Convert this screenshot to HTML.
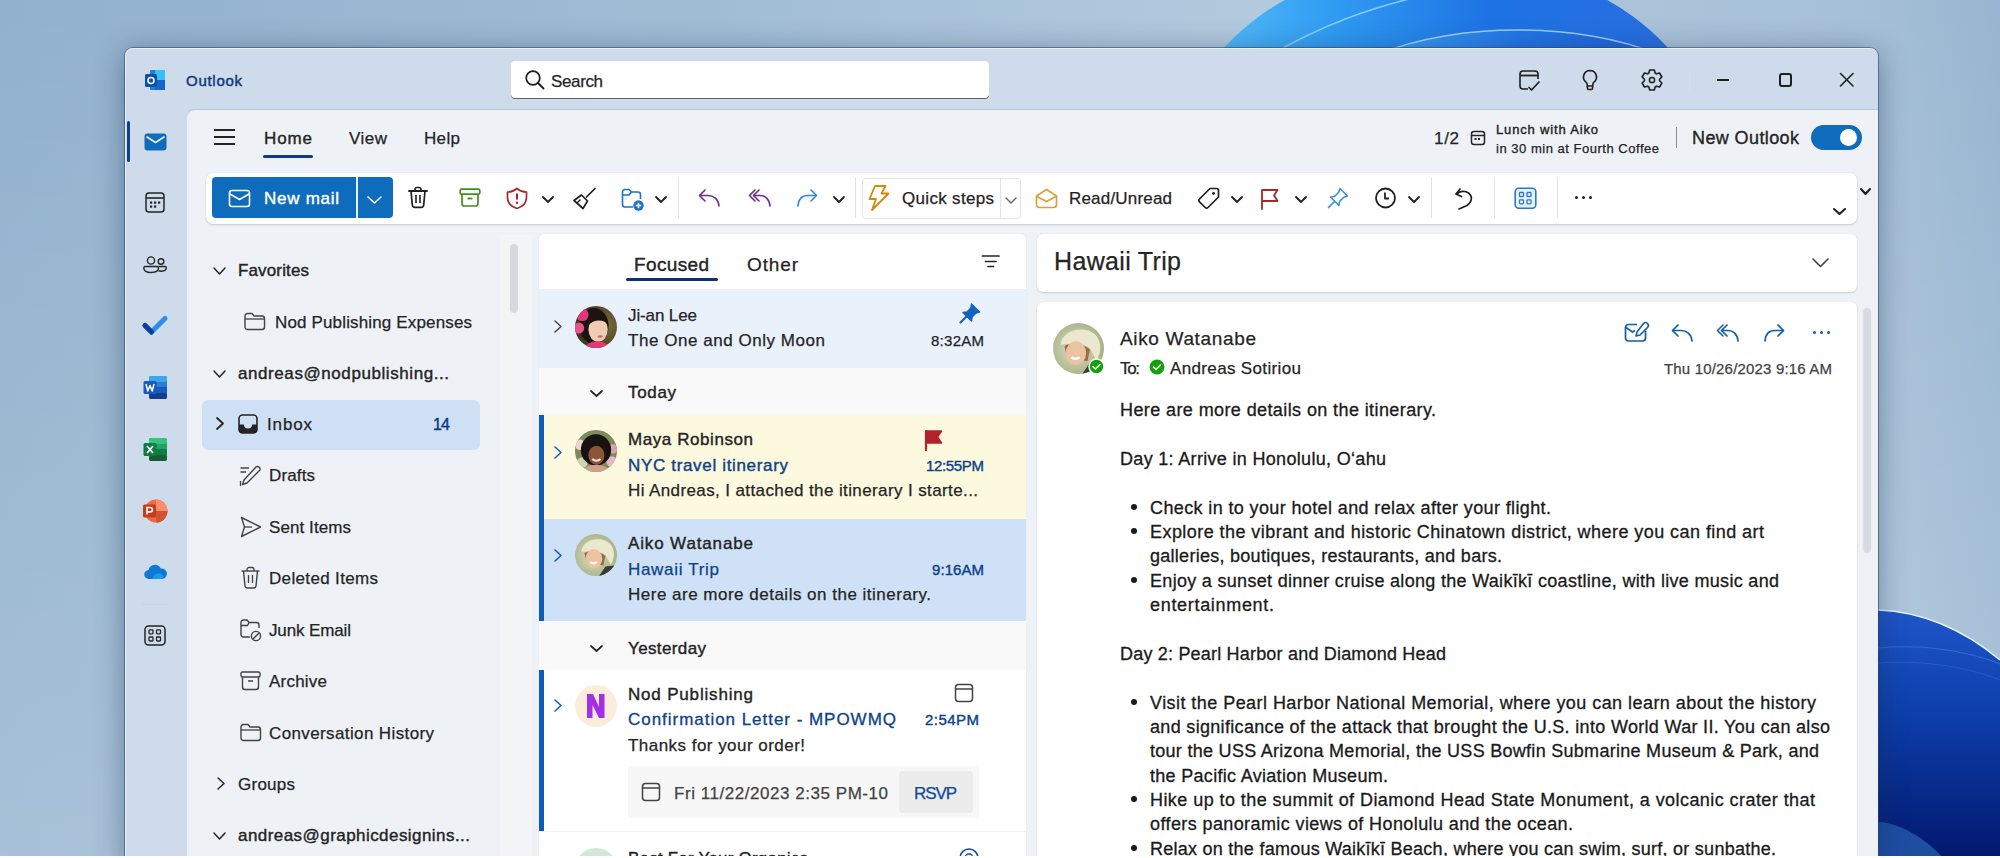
<!DOCTYPE html>
<html><head><meta charset="utf-8"><title>Outlook</title>
<style>
html,body{margin:0;padding:0;width:2000px;height:858px;overflow:hidden;background:#a9c0d4}
body{position:relative;font-family:"Liberation Sans",sans-serif;-webkit-font-smoothing:antialiased}
.a{position:absolute}
.t{position:absolute;white-space:nowrap}
svg.a{overflow:visible}
</style></head><body>
<svg class="a" style="left:0;top:0" width="2000" height="858" viewBox="0 0 2000 858">
<defs>
<linearGradient id="wp" x1="0" y1="0" x2="2000" y2="0" gradientUnits="userSpaceOnUse">
<stop offset="0" stop-color="#91b1cd"/><stop offset="0.35" stop-color="#a0bcd5"/><stop offset="0.62" stop-color="#b2cade"/><stop offset="0.93" stop-color="#a6c0d7"/><stop offset="1" stop-color="#97b5d0"/></linearGradient>
<linearGradient id="wpv" x1="0" y1="0" x2="0" y2="858" gradientUnits="userSpaceOnUse">
<stop offset="0" stop-color="#ffffff" stop-opacity="0"/><stop offset="1" stop-color="#ffffff" stop-opacity="0.2"/></linearGradient>
<linearGradient id="bl1" x1="1180" y1="0" x2="1700" y2="0" gradientUnits="userSpaceOnUse">
<stop offset="0" stop-color="#5cc4fa"/><stop offset="0.3" stop-color="#2f9bf2"/><stop offset="0.6" stop-color="#1e72e4"/><stop offset="1" stop-color="#2a6ee0"/></linearGradient>
<linearGradient id="bl1b" x1="1390" y1="0" x2="1650" y2="0" gradientUnits="userSpaceOnUse">
<stop offset="0" stop-color="#3b9ff4"/><stop offset="0.5" stop-color="#2376e6"/><stop offset="1" stop-color="#1f62da"/></linearGradient>
<linearGradient id="bl2" x1="0" y1="600" x2="0" y2="858" gradientUnits="userSpaceOnUse">
<stop offset="0" stop-color="#2058cc"/><stop offset="0.45" stop-color="#0d3eaa"/><stop offset="1" stop-color="#03186e"/></linearGradient>
</defs>
<rect width="2000" height="858" fill="url(#wp)"/>
<rect width="2000" height="858" fill="url(#wpv)"/>
<ellipse cx="1446" cy="152" rx="264" ry="192" fill="url(#bl1)"/>
<path d="M1262 60 C1320 25 1370 8 1425 -5" stroke="#9fe0ff" stroke-width="1.6" fill="none" opacity="0.75"/>
<ellipse cx="1518" cy="115" rx="200" ry="85" fill="url(#bl1b)" stroke="#b5e4ff" stroke-width="1.4" stroke-opacity="0.8"/>
<path d="M1878 610 C1930 612 1970 635 2000 660 L2000 858 L1878 858 Z" fill="url(#bl2)"/>
<path d="M1878 610 C1930 612 1970 635 2000 660" stroke="#e6f4ff" stroke-width="1.5" fill="none"/>
<path d="M1878 648 C1920 644 1965 650 2000 664" stroke="#4a7fe0" stroke-width="1.2" fill="none" opacity="0.55"/>
<path d="M1878 663 C1920 660 1965 666 2000 680" stroke="#4a7fe0" stroke-width="1" fill="none" opacity="0.35"/>
<path d="M1878 822 C1900 823 1925 838 1943 858 L1878 858 Z" fill="#1d4ea2"/>
</svg>
<div class="a" style="left:125px;top:48px;width:1753px;height:820px;background:#cddbea;border-radius:8px 8px 0 0;box-shadow:0 4px 30px rgba(20,45,80,0.45),0 0 0 1px rgba(45,75,115,0.55),inset 1px 1px 0 rgba(255,255,255,0.55)"></div>
<div class="a" style="left:187px;top:110px;width:1691px;height:746px;background:#eef2f7;border-radius:8px 0 0 0;box-shadow:0 -1px 0 rgba(120,140,165,0.25)"></div>
<div class="a" style="left:0;top:856px;width:2000px;height:2px;background:#fff"></div>
<svg class="a" style="left:144px;top:69px;" width="22" height="23" viewBox="0 0 22 23" fill="none">
<rect x="6" y="1" width="15" height="20" rx="1.2" fill="#1b7fd6"/>
<rect x="11" y="1" width="10" height="10" fill="#38c0f2"/>
<rect x="11" y="11" width="10" height="10" fill="#1466c8"/>
<rect x="1" y="5" width="12" height="13" rx="1.5" fill="#0b4fa6"/>
<circle cx="7" cy="11.5" r="3" stroke="#fff" stroke-width="1.6"/></svg>
<div class="t" style="left:186.0px;top:73.30px;font-size:15px;line-height:15px;-webkit-text-stroke:0.45px #0e3a80;color:#0e3a80;letter-spacing:0.718px;">Outlook</div>
<div class="a" style="left:511px;top:61px;width:478px;height:38px;background:#fff;border-radius:4px;box-shadow:inset 0 -1px 0 #616161"></div>
<svg class="a" style="left:524px;top:69px;" width="22" height="22" viewBox="0 0 22 22" fill="none"><circle cx="9" cy="9" r="6.8" stroke="#1f1f1f" stroke-width="1.7"/><path d="M14 14 L19.5 19.5" stroke="#1f1f1f" stroke-width="1.8" stroke-linecap="round"/></svg>
<div class="t" style="left:551.0px;top:72.61px;font-size:17px;line-height:17px;-webkit-text-stroke:0.25px #242424;color:#242424;letter-spacing:-0.373px;">Search</div>
<svg class="a" style="left:1518px;top:69px;" width="24" height="24" viewBox="0 0 24 24" fill="none"><path d="M10 20 H5 a3 3 0 0 1 -3 -3 V5 a3 3 0 0 1 3 -3 H17 a3 3 0 0 1 3 3 V10" stroke="#1f1f1f" stroke-width="1.6"/>
<path d="M2 6.5 H20" stroke="#1f1f1f" stroke-width="1.8"/>
<path d="M11 18.5 L13.5 21 L21 13" stroke="#1f1f1f" stroke-width="1.7" stroke-linecap="round" stroke-linejoin="round"/></svg>
<svg class="a" style="left:1580px;top:68px;" width="20" height="24" viewBox="0 0 20 24" fill="none"><path d="M10 2.5 a6.5 6.5 0 0 1 4 11.6 c-.8 .7 -1.2 1.4 -1.2 2.4 V18 H7.2 V16.5 c0 -1 -.4 -1.7 -1.2 -2.4 A6.5 6.5 0 0 1 10 2.5 Z" stroke="#1f1f1f" stroke-width="1.6"/>
<path d="M7.4 18.2 V20 a1.5 1.5 0 0 0 1.5 1.5 h2.2 a1.5 1.5 0 0 0 1.5 -1.5 V18.2" stroke="#1f1f1f" stroke-width="1.6"/></svg>
<svg class="a" style="left:1639.5px;top:68px;" width="24" height="24" viewBox="0 0 24 24" fill="none"><polygon points="8.91,5.06 9.68,1.96 14.32,1.96 15.09,5.06 16.47,5.85 19.53,4.98 21.85,8.99 19.56,11.21 19.56,12.79 21.85,15.01 19.53,19.02 16.47,18.15 15.09,18.94 14.32,22.04 9.68,22.04 8.91,18.94 7.53,18.15 4.47,19.02 2.15,15.01 4.44,12.79 4.44,11.21 2.15,8.99 4.47,4.98 7.53,5.85" stroke="#1f1f1f" stroke-width="1.6" stroke-linejoin="round"/><circle cx="12" cy="12" r="2.6" stroke="#1f1f1f" stroke-width="1.5"/></svg>
<div class="a" style="left:1689px;top:70px;width:1px;height:22px;background:#d5dfe9;"></div>
<div class="a" style="left:1717px;top:79px;width:12px;height:2px;background:#1f1f1f;"></div>
<div class="a" style="left:1779px;top:73px;width:9px;height:10px;border:2px solid #1f1f1f;border-radius:3px"></div>
<svg class="a" style="left:1839px;top:72px;" width="16" height="16" viewBox="0 0 16 16" fill="none"><path d="M1.5 1.5 L14 14 M14 1.5 L1.5 14" stroke="#1f1f1f" stroke-width="1.6" stroke-linecap="round"/></svg>
<div class="a" style="left:127px;top:121px;width:2.5px;height:41px;background:#0d3f90;border-radius:2px"></div>
<div class="a" style="left:214px;top:129px;width:21px;height:2px;background:#242424;"></div>
<div class="a" style="left:214px;top:136px;width:21px;height:2px;background:#242424;"></div>
<div class="a" style="left:214px;top:143px;width:21px;height:2px;background:#242424;"></div>
<div class="t" style="left:264.0px;top:129.61px;font-size:17px;line-height:17px;-webkit-text-stroke:0.4px #242424;color:#242424;letter-spacing:0.884px;">Home</div>
<div class="a" style="left:263px;top:155px;width:50px;height:3px;background:#123a8c;border-radius:2px"></div>
<div class="t" style="left:349.0px;top:129.61px;font-size:17px;line-height:17px;-webkit-text-stroke:0.25px #242424;color:#242424;letter-spacing:0.487px;">View</div>
<div class="t" style="left:424.0px;top:129.61px;font-size:17px;line-height:17px;-webkit-text-stroke:0.25px #242424;color:#242424;letter-spacing:0.346px;">Help</div>
<div class="t" style="left:1434.0px;top:129.61px;font-size:17px;line-height:17px;-webkit-text-stroke:0.25px #242424;color:#242424;letter-spacing:0.684px;">1/2</div>
<svg class="a" style="left:1470px;top:130px;" width="16" height="16" viewBox="0 0 16 16" fill="none"><rect x="1.5" y="1.5" width="13" height="13" rx="2.5" stroke="#242424" stroke-width="1.5"/><path d="M1.5 5.5 H14.5" stroke="#242424" stroke-width="1.5"/><rect x="4.5" y="8" width="2" height="2" fill="#242424"/><rect x="8" y="8" width="2" height="2" fill="#242424"/></svg>
<div class="t" style="left:1496.0px;top:123.00px;font-size:13px;line-height:13px;-webkit-text-stroke:0.4px #242424;color:#242424;letter-spacing:0.833px;">Lunch with Aiko</div>
<div class="t" style="left:1496.0px;top:142.00px;font-size:13px;line-height:13px;-webkit-text-stroke:0.25px #242424;color:#242424;letter-spacing:0.518px;">in 30 min at Fourth Coffee</div>
<div class="a" style="left:1676px;top:127px;width:1px;height:21px;background:#8a8a8a;"></div>
<div class="t" style="left:1692.0px;top:128.76px;font-size:18px;line-height:18px;-webkit-text-stroke:0.35px #242424;color:#242424;letter-spacing:0.396px;">New Outlook</div>
<div class="a" style="left:1811px;top:125px;width:51px;height:25px;background:#0f6cbd;border-radius:13px"></div>
<div class="a" style="left:1840px;top:129px;width:17px;height:17px;background:#fff;border-radius:50%"></div>
<div class="a" style="left:206px;top:173px;width:1651px;height:51px;background:#fff;border-radius:7px;box-shadow:0 1px 2px rgba(0,0,0,0.16),0 0 1px rgba(0,0,0,0.1)"></div>
<div class="a" style="left:212px;top:177px;width:181px;height:41px;background:#0f6cbd;border-radius:4px"></div>
<div class="a" style="left:356px;top:177px;width:1.5px;height:41px;background:#e8f1fa;"></div>
<svg class="a" style="left:228px;top:189px;" width="24" height="20" viewBox="0 0 24 20" fill="none"><rect x="1.5" y="1.5" width="20" height="16" rx="2.5" stroke="#fff" stroke-width="1.6"/><path d="M2 5 L11.5 10.5 L21 5" stroke="#fff" stroke-width="1.6" stroke-linejoin="round"/></svg>
<div class="t" style="left:264.0px;top:189.61px;font-size:17px;line-height:17px;-webkit-text-stroke:0.4px #ffffff;color:#ffffff;letter-spacing:0.729px;">New mail</div>
<svg class="a" style="left:366px;top:195px;" width="17" height="10" viewBox="0 0 17 10" fill="none"><path d="M2 2 L8.5 8 L15 2" stroke="#fff" stroke-width="1.6" stroke-linecap="round" stroke-linejoin="round"/></svg>
<svg class="a" style="left:407px;top:186px;" width="22" height="23" viewBox="0 0 22 23" fill="none"><path d="M2 5 H20" stroke="#1f1f1f" stroke-width="1.8" stroke-linecap="round"/><path d="M8 5 V3.5 a2 2 0 0 1 2 -2 h2 a2 2 0 0 1 2 2 V5" stroke="#1f1f1f" stroke-width="1.6"/><path d="M4 5 L5.3 19 a2.5 2.5 0 0 0 2.5 2.3 h6.4 a2.5 2.5 0 0 0 2.5 -2.3 L18 5" stroke="#1f1f1f" stroke-width="1.7"/><path d="M9 9 V17 M13 9 V17" stroke="#1f1f1f" stroke-width="1.6"/></svg>
<svg class="a" style="left:459px;top:188px;" width="22" height="20" viewBox="0 0 22 20" fill="none"><rect x="1.2" y="1.2" width="19.6" height="5" rx="1.5" stroke="#3f8f1a" stroke-width="1.7"/><path d="M3 6.5 V15.5 a2.5 2.5 0 0 0 2.5 2.5 h11 a2.5 2.5 0 0 0 2.5 -2.5 V6.5" stroke="#3f8f1a" stroke-width="1.7"/><path d="M8.5 10.5 H13.5" stroke="#3f8f1a" stroke-width="1.8"/></svg>
<svg class="a" style="left:506px;top:187px;" width="22" height="23" viewBox="0 0 22 23" fill="none"><path d="M11 1.5 C8 4 5 5 1.5 5 V10.5 C1.5 16 5 19.5 11 21.5 C17 19.5 20.5 16 20.5 10.5 V5 C17 5 14 4 11 1.5 Z" stroke="#a8262c" stroke-width="1.7" stroke-linejoin="round"/><path d="M11 6.5 V12.5" stroke="#a8262c" stroke-width="2"/><circle cx="11" cy="15.8" r="1.2" fill="#a8262c"/></svg>
<svg class="a" style="left:541px;top:195px;" width="14" height="9" viewBox="0 0 14 9" fill="none"><path d="M2 2 L7.0 7 L12 2" stroke="#1f1f1f" stroke-width="1.8" stroke-linecap="round" stroke-linejoin="round"/></svg>
<svg class="a" style="left:572px;top:187px;" width="25" height="24" viewBox="0 0 25 24" fill="none"><path d="M23 1.5 L14.5 10" stroke="#1f1f1f" stroke-width="1.7" stroke-linecap="round"/><path d="M9.5 8 L15.5 14 L11 21.5 L2 13.5 Z" stroke="#1f1f1f" stroke-width="1.7" stroke-linejoin="round"/><path d="M5 16 L8.5 12.5" stroke="#1f1f1f" stroke-width="1.5"/></svg>
<svg class="a" style="left:621px;top:188px;" width="24" height="24" viewBox="0 0 24 24" fill="none"><path d="M12 19 H4 a2.5 2.5 0 0 1 -2.5 -2.5 V4 a2.5 2.5 0 0 1 2.5 -2.5 h4 l2.5 2.5 H17 a2.5 2.5 0 0 1 2.5 2.5 V11" stroke="#1a73c8" stroke-width="1.6" stroke-linejoin="round"/><path d="M1.5 7 H8 l2.5 -3" stroke="#1a73c8" stroke-width="1.6"/><circle cx="17.5" cy="17.5" r="5.2" fill="#1a73c8"/><path d="M17.5 14.8 V20.2 M14.8 17.5 H20.2" stroke="#fff" stroke-width="1.5"/></svg>
<svg class="a" style="left:654px;top:195px;" width="14" height="9" viewBox="0 0 14 9" fill="none"><path d="M2 2 L7.0 7 L12 2" stroke="#1f1f1f" stroke-width="1.8" stroke-linecap="round" stroke-linejoin="round"/></svg>
<div class="a" style="left:678px;top:177px;width:1px;height:41px;background:#e1e1e1;"></div>
<svg class="a" style="left:697px;top:188px;" width="25" height="20" viewBox="0 0 25 20" fill="none"><path d="M8 2 L2.5 7.5 L8 13" stroke="#6e2a8e" stroke-width="1.6" stroke-linecap="round" stroke-linejoin="round"/><path d="M3 7.5 H11 C16.5 7.5 21.5 11 22 18" stroke="#6e2a8e" stroke-width="1.6" stroke-linecap="round"/></svg>
<svg class="a" style="left:748px;top:188px;" width="25" height="20" viewBox="0 0 25 20" fill="none"><path d="M7 2 L1.5 7.5 L7 13" stroke="#6e2a8e" stroke-width="1.6" stroke-linecap="round" stroke-linejoin="round"/><path d="M11 2 L5.5 7.5 L11 13" stroke="#6e2a8e" stroke-width="1.6" stroke-linecap="round" stroke-linejoin="round"/><path d="M6 7.5 H12 C17 7.5 21.5 11 22 18" stroke="#6e2a8e" stroke-width="1.6" stroke-linecap="round"/></svg>
<svg class="a" style="left:796px;top:188px;" width="25" height="20" viewBox="0 0 25 20" fill="none"><path d="M15 2 L20.5 7.5 L15 13" stroke="#2f86d6" stroke-width="1.6" stroke-linecap="round" stroke-linejoin="round"/><path d="M20 7.5 H12 C6.5 7.5 2.5 11 2 18" stroke="#2f86d6" stroke-width="1.6" stroke-linecap="round"/></svg>
<svg class="a" style="left:832px;top:195px;" width="14" height="9" viewBox="0 0 14 9" fill="none"><path d="M2 2 L7.0 7 L12 2" stroke="#1f1f1f" stroke-width="1.8" stroke-linecap="round" stroke-linejoin="round"/></svg>
<div class="a" style="left:855px;top:177px;width:1px;height:41px;background:#e1e1e1;"></div>
<div class="a" style="left:862px;top:178px;width:157px;height:39px;border:1px solid #e3e3e3;border-radius:4px"></div>
<div class="a" style="left:1000px;top:178px;width:1px;height:40px;background:#e3e3e3;"></div>
<svg class="a" style="left:866px;top:184px;" width="26" height="28" viewBox="0 0 26 28" fill="none"><path d="M9 2 H19.5 L15.5 9.5 H22.5 L6 26 L10 15 H3.5 Z" stroke="#d08a0c" stroke-width="1.8" stroke-linejoin="round"/></svg>
<div class="t" style="left:902.0px;top:189.61px;font-size:17px;line-height:17px;-webkit-text-stroke:0.25px #242424;color:#242424;letter-spacing:0.319px;">Quick steps</div>
<svg class="a" style="left:1004px;top:196px;" width="14" height="9" viewBox="0 0 14 9" fill="none"><path d="M2 2 L7.0 7 L12 2" stroke="#616161" stroke-width="1.4" stroke-linecap="round" stroke-linejoin="round"/></svg>
<svg class="a" style="left:1035px;top:188px;" width="23" height="21" viewBox="0 0 23 21" fill="none"><path d="M1.5 8 L11.5 1.5 L21.5 8 V16.5 a3 3 0 0 1 -3 3 H4.5 a3 3 0 0 1 -3 -3 Z" stroke="#d7a23c" stroke-width="1.7" stroke-linejoin="round"/><path d="M2 8.5 L11.5 13.5 L21 8.5" stroke="#d7a23c" stroke-width="1.7"/></svg>
<div class="t" style="left:1069.0px;top:189.61px;font-size:17px;line-height:17px;-webkit-text-stroke:0.25px #242424;color:#242424;letter-spacing:0.188px;">Read/Unread</div>
<svg class="a" style="left:1197px;top:186px;" width="24" height="24" viewBox="0 0 24 24" fill="none"><path d="M13 2.5 H19.5 a2 2 0 0 1 2 2 V11 L11 21.5 a2 2 0 0 1 -2.8 0 L2.5 15.8 a2 2 0 0 1 0 -2.8 Z" stroke="#1f1f1f" stroke-width="1.7" stroke-linejoin="round"/><circle cx="16.5" cy="7.5" r="1.4" fill="#1f1f1f"/></svg>
<svg class="a" style="left:1230px;top:195px;" width="14" height="9" viewBox="0 0 14 9" fill="none"><path d="M2 2 L7.0 7 L12 2" stroke="#1f1f1f" stroke-width="1.8" stroke-linecap="round" stroke-linejoin="round"/></svg>
<svg class="a" style="left:1260px;top:188px;" width="20" height="22" viewBox="0 0 20 22" fill="none"><path d="M2 21 V2 H17.5 L14 7.5 L17.5 13 H2" stroke="#a8262c" stroke-width="1.8" stroke-linejoin="round" stroke-linecap="round"/></svg>
<svg class="a" style="left:1294px;top:195px;" width="14" height="9" viewBox="0 0 14 9" fill="none"><path d="M2 2 L7.0 7 L12 2" stroke="#1f1f1f" stroke-width="1.8" stroke-linecap="round" stroke-linejoin="round"/></svg>
<svg class="a" style="left:1326px;top:186px;" width="24" height="24" viewBox="0 0 24 24" fill="none"><path d="M14 2.5 L21.5 10 L17.5 11.5 L13.5 15.5 L13 19.5 L4.5 11 L8.5 10.5 L12.5 6.5 Z" stroke="#3a8fde" stroke-width="1.6" stroke-linejoin="round"/><path d="M8.5 15.5 L2.5 21.5" stroke="#3a8fde" stroke-width="1.7" stroke-linecap="round"/></svg>
<svg class="a" style="left:1374px;top:187px;" width="24" height="24" viewBox="0 0 24 24" fill="none"><circle cx="11.5" cy="11" r="9.5" stroke="#1f1f1f" stroke-width="1.8"/><path d="M11 5.5 V11.5 H15" stroke="#1f1f1f" stroke-width="1.8" stroke-linejoin="round"/></svg>
<svg class="a" style="left:1407px;top:195px;" width="14" height="9" viewBox="0 0 14 9" fill="none"><path d="M2 2 L7.0 7 L12 2" stroke="#1f1f1f" stroke-width="1.8" stroke-linecap="round" stroke-linejoin="round"/></svg>
<div class="a" style="left:1431px;top:177px;width:1px;height:41px;background:#e1e1e1;"></div>
<svg class="a" style="left:1453px;top:187px;" width="22" height="24" viewBox="0 0 22 24" fill="none"><path d="M7 2 L3 7 L8.5 9.5" stroke="#1f1f1f" stroke-width="1.7" stroke-linecap="round" stroke-linejoin="round"/><path d="M3.5 7 C7 4 12 3.5 15.5 6 C20 9.5 19 15 14 18.5 L6 22" stroke="#1f1f1f" stroke-width="1.7" stroke-linecap="round"/></svg>
<div class="a" style="left:1494px;top:177px;width:1px;height:41px;background:#e1e1e1;"></div>
<svg class="a" style="left:1514px;top:187px;" width="24" height="23" viewBox="0 0 24 23" fill="none"><rect x="1.2" y="1.2" width="20.6" height="20" rx="3.5" fill="#e6f1fb" stroke="#2a78c8" stroke-width="1.6"/><rect x="5.5" y="5.5" width="4" height="4" rx="0.8" stroke="#2a78c8" stroke-width="1.3"/><rect x="13" y="5.5" width="4" height="4" rx="0.8" stroke="#2a78c8" stroke-width="1.3"/><rect x="5.5" y="12.8" width="4" height="4" rx="0.8" stroke="#2a78c8" stroke-width="1.3"/><rect x="13" y="12.8" width="4" height="4" rx="0.8" stroke="#2a78c8" stroke-width="1.3"/></svg>
<div class="a" style="left:1557px;top:177px;width:1px;height:41px;background:#e1e1e1;"></div>
<div class="a" style="left:1574.5px;top:196px;width:3px;height:3px;background:#1f1f1f;border-radius:50%"></div>
<div class="a" style="left:1581.5px;top:196px;width:3px;height:3px;background:#1f1f1f;border-radius:50%"></div>
<div class="a" style="left:1588.5px;top:196px;width:3px;height:3px;background:#1f1f1f;border-radius:50%"></div>
<svg class="a" style="left:1832px;top:207px;" width="15" height="9" viewBox="0 0 15 9" fill="none"><path d="M2 2 L7.5 7 L13 2" stroke="#1f1f1f" stroke-width="2.1" stroke-linecap="round" stroke-linejoin="round"/></svg>
<svg class="a" style="left:1859px;top:187px;" width="13" height="9" viewBox="0 0 13 9" fill="none"><path d="M2 2 L6.5 7 L11 2" stroke="#1f1f1f" stroke-width="2.1" stroke-linecap="round" stroke-linejoin="round"/></svg>
<svg class="a" style="left:144px;top:133px;" width="23" height="18" viewBox="0 0 23 18" fill="none"><rect x="0.5" y="0.5" width="22" height="17" rx="3" fill="#0f6cbd"/><path d="M3 4 L11.5 9.5 L20 4" stroke="#e8f2fb" stroke-width="1.6" stroke-linecap="round" stroke-linejoin="round"/></svg>
<svg class="a" style="left:145px;top:192px;" width="20" height="21" viewBox="0 0 20 21" fill="none"><rect x="1" y="1" width="18" height="19" rx="3" stroke="#242424" stroke-width="1.5"/><path d="M1 6 H19" stroke="#242424" stroke-width="1.6"/><rect x="5" y="9.5" width="2.2" height="2.2" fill="#242424"/><rect x="9" y="9.5" width="2.2" height="2.2" fill="#242424"/><rect x="13" y="9.5" width="2.2" height="2.2" fill="#242424"/><rect x="5" y="13.5" width="2.2" height="2.2" fill="#242424"/><rect x="9" y="13.5" width="2.2" height="2.2" fill="#242424"/></svg>
<svg class="a" style="left:143px;top:256px;" width="25" height="18" viewBox="0 0 25 18" fill="none"><circle cx="8" cy="4.5" r="3.6" stroke="#242424" stroke-width="1.4"/><circle cx="18" cy="5.5" r="2.8" stroke="#242424" stroke-width="1.4"/><path d="M2 10.5 H14 a1.5 1.5 0 0 1 1.5 1.5 C15.5 15 12.5 16.5 8 16.5 C3.5 16.5 0.8 15 0.8 12 a1.5 1.5 0 0 1 1.2 -1.5 Z" stroke="#242424" stroke-width="1.4"/><path d="M15.5 10.5 H22 a1.3 1.3 0 0 1 1.3 1.3 C23.3 14 21.5 15.2 18.5 15.2 L15.5 14.8" stroke="#242424" stroke-width="1.4"/></svg>
<svg class="a" style="left:143px;top:316px;" width="24" height="20" viewBox="0 0 24 20" fill="none"><path d="M2 9.5 L8.5 16 L22 2.5" stroke="#2f8fe6" stroke-width="5" stroke-linecap="round" stroke-linejoin="round"/><path d="M2 9.5 L8.5 16" stroke="#0b3fa0" stroke-width="5" stroke-linecap="round"/></svg>
<svg class="a" style="left:143px;top:375px;" width="25" height="25" viewBox="0 0 25 25" fill="none"><rect x="6" y="1" width="18" height="23" rx="2" fill="#2b7cd3"/><rect x="6" y="1" width="18" height="6" rx="2" fill="#41a5ee"/><rect x="6" y="12" width="18" height="6" fill="#185abd"/><rect x="6" y="18" width="18" height="6" rx="2" fill="#103f91"/><rect x="0.5" y="6" width="13" height="13" rx="1.5" fill="#185abd"/><path d="M3 9 L4.8 16 L7 10.5 L9.2 16 L11 9" stroke="#fff" stroke-width="1.5" stroke-linejoin="round"/></svg>
<svg class="a" style="left:143px;top:437px;" width="25" height="25" viewBox="0 0 25 25" fill="none"><rect x="6" y="1" width="18" height="23" rx="2" fill="#21a366"/><rect x="6" y="1" width="18" height="6" rx="2" fill="#33c481"/><rect x="6" y="12" width="18" height="6" fill="#107c41"/><rect x="6" y="18" width="18" height="6" rx="2" fill="#185c37"/><rect x="0.5" y="6" width="13" height="13" rx="1.5" fill="#107c41"/><path d="M4 9 L10 16 M10 9 L4 16" stroke="#fff" stroke-width="1.7"/></svg>
<svg class="a" style="left:142px;top:498px;" width="26" height="26" viewBox="0 0 26 26" fill="none"><circle cx="14" cy="13" r="11.5" fill="#ed6c47"/><path d="M14 1.5 A11.5 11.5 0 0 1 25.5 13 H14 Z" fill="#ff8f6b"/><path d="M14 13 H25.5 A11.5 11.5 0 0 1 14 24.5 Z" fill="#d35230"/><rect x="1" y="6.5" width="13" height="13" rx="1.5" fill="#c43e1c"/><path d="M5 16.5 V9.5 H8.2 a2.2 2.2 0 0 1 0 4.4 H5" stroke="#fff" stroke-width="1.6"/></svg>
<svg class="a" style="left:144px;top:564px;" width="23" height="16" viewBox="0 0 23 16" fill="none"><path d="M5 15 a4.5 4.5 0 0 1 -0.5 -9 a6.5 6.5 0 0 1 12.2 -1.5 a5 5 0 0 1 1.8 10.5 Z" fill="#0f78d4"/><path d="M9 15 a4 4 0 0 1 4 -5 a5 5 0 0 1 5.5 1 a3 3 0 0 1 0 4 Z" fill="#1c9ae8"/></svg>
<div class="a" style="left:142px;top:604px;width:26px;height:1px;background:#c8d5e1;"></div>
<svg class="a" style="left:144px;top:625px;" width="22" height="21" viewBox="0 0 22 21" fill="none"><rect x="1" y="1" width="20" height="19" rx="3.5" stroke="#242424" stroke-width="1.5"/><rect x="5" y="4.8" width="4" height="4" rx="0.8" stroke="#242424" stroke-width="1.3"/><rect x="12.5" y="4.8" width="4" height="4" rx="0.8" stroke="#242424" stroke-width="1.3"/><rect x="5" y="12" width="4" height="4" rx="0.8" stroke="#242424" stroke-width="1.3"/><rect x="12.5" y="12" width="4" height="4" rx="0.8" stroke="#242424" stroke-width="1.3"/></svg>
<div class="a" style="left:500px;top:235px;width:32px;height:621px;background:#f3f4f6;"></div>
<div class="a" style="left:510px;top:244px;width:8px;height:69px;background:#d6d8db;border-radius:4px"></div>
<svg class="a" style="left:212px;top:266px;" width="15" height="10" viewBox="0 0 15 10" fill="none"><path d="M2 2 L7.5 8 L13 2" stroke="#242424" stroke-width="1.5" stroke-linecap="round" stroke-linejoin="round"/></svg>
<div class="t" style="left:238.0px;top:261.61px;font-size:17px;line-height:17px;-webkit-text-stroke:0.4px #242424;color:#242424;letter-spacing:0.136px;">Favorites</div>
<svg class="a" style="left:244px;top:312px;" width="22" height="19" viewBox="0 0 22 19" fill="none"><path d="M1 4 a2.5 2.5 0 0 1 2.5 -2.5 H8 l2 2.5 H18 a2.5 2.5 0 0 1 2.5 2.5 V15 a2.5 2.5 0 0 1 -2.5 2.5 H3.5 A2.5 2.5 0 0 1 1 15 Z" stroke="#424242" stroke-width="1.4" stroke-linejoin="round"/><path d="M1 7 H20.5" stroke="#424242" stroke-width="1.3"/></svg>
<div class="t" style="left:275.0px;top:313.61px;font-size:17px;line-height:17px;-webkit-text-stroke:0.25px #242424;color:#242424;letter-spacing:0.149px;">Nod Publishing Expenses</div>
<svg class="a" style="left:212px;top:369px;" width="15" height="10" viewBox="0 0 15 10" fill="none"><path d="M2 2 L7.5 8 L13 2" stroke="#242424" stroke-width="1.5" stroke-linecap="round" stroke-linejoin="round"/></svg>
<div class="t" style="left:238.0px;top:364.61px;font-size:17px;line-height:17px;-webkit-text-stroke:0.4px #242424;color:#242424;letter-spacing:0.575px;">andreas@nodpublishing...</div>
<div class="a" style="left:202px;top:400px;width:278px;height:50px;background:#cfe0f5;border-radius:6px"></div>
<svg class="a" style="left:215px;top:416px;" width="10" height="15" viewBox="0 0 10 15" fill="none"><path d="M2 2 L8 7.5 L2 13" stroke="#242424" stroke-width="1.8" stroke-linecap="round" stroke-linejoin="round"/></svg>
<svg class="a" style="left:238px;top:414px;" width="21" height="20" viewBox="0 0 21 20" fill="none"><rect x="1" y="1" width="18" height="18" rx="3.5" stroke="#242424" stroke-width="1.6"/><path d="M1 10.5 H6 a4 4 0 0 0 8 0 H19 V15.5 a3.5 3.5 0 0 1 -3.5 3.5 H4.5 A3.5 3.5 0 0 1 1 15.5 Z" fill="#242424"/></svg>
<div class="t" style="left:267.0px;top:415.61px;font-size:17px;line-height:17px;-webkit-text-stroke:0.25px #242424;color:#242424;letter-spacing:0.853px;">Inbox</div>
<div class="t" style="left:433.0px;top:417.46px;font-size:16px;line-height:16px;-webkit-text-stroke:0.4px #0e3b80;color:#0e3b80;letter-spacing:-0.797px;">14</div>
<svg class="a" style="left:239px;top:465px;" width="23" height="23" viewBox="0 0 23 23" fill="none"><path d="M1.5 3 H10 M1.5 7 H7" stroke="#424242" stroke-width="1.3"/><path d="M17 2 a2.5 2.5 0 0 1 3.5 3.5 L8 18 L3.5 19.5 L5 15 Z" stroke="#424242" stroke-width="1.4" stroke-linejoin="round"/><path d="M1.5 21 V16" stroke="#424242" stroke-width="1.3"/></svg>
<div class="t" style="left:269.0px;top:466.61px;font-size:17px;line-height:17px;-webkit-text-stroke:0.25px #242424;color:#242424;letter-spacing:0.132px;">Drafts</div>
<svg class="a" style="left:240px;top:516px;" width="22" height="22" viewBox="0 0 22 22" fill="none"><path d="M1.5 1.5 L20.5 11 L1.5 20.5 L4.5 11 Z" stroke="#424242" stroke-width="1.4" stroke-linejoin="round"/><path d="M4.5 11 H12" stroke="#424242" stroke-width="1.3"/></svg>
<div class="t" style="left:269.0px;top:518.61px;font-size:17px;line-height:17px;-webkit-text-stroke:0.25px #242424;color:#242424;letter-spacing:0.082px;">Sent Items</div>
<svg class="a" style="left:240px;top:566px;" width="21" height="24" viewBox="0 0 21 24" fill="none"><path d="M1.5 5 H19.5" stroke="#424242" stroke-width="1.4"/><path d="M7 5 V3.5 a2 2 0 0 1 2 -2 h3 a2 2 0 0 1 2 2 V5" stroke="#424242" stroke-width="1.3"/><path d="M3.5 5 L5 20 a2.3 2.3 0 0 0 2.3 2 h6.4 a2.3 2.3 0 0 0 2.3 -2 L17.5 5" stroke="#424242" stroke-width="1.4"/><path d="M8.5 9 V17 M12.5 9 V17" stroke="#424242" stroke-width="1.3"/></svg>
<div class="t" style="left:269.0px;top:569.61px;font-size:17px;line-height:17px;-webkit-text-stroke:0.25px #242424;color:#242424;letter-spacing:0.343px;">Deleted Items</div>
<svg class="a" style="left:240px;top:619px;" width="22" height="23" viewBox="0 0 22 23" fill="none"><path d="M10 18 H3.5 A2.5 2.5 0 0 1 1 15.5 V3.5 A2.5 2.5 0 0 1 3.5 1 H7 L9 3.5 H16.5 A2.5 2.5 0 0 1 19 6 V9" stroke="#424242" stroke-width="1.4" stroke-linejoin="round"/><path d="M1 6.5 H7.5 L9 3.5" stroke="#424242" stroke-width="1.3"/><circle cx="16" cy="17" r="4.6" stroke="#424242" stroke-width="1.4"/><path d="M13 20 L19 14" stroke="#424242" stroke-width="1.3"/></svg>
<div class="t" style="left:269.0px;top:621.61px;font-size:17px;line-height:17px;-webkit-text-stroke:0.25px #242424;color:#242424;letter-spacing:-0.127px;">Junk Email</div>
<svg class="a" style="left:240px;top:671px;" width="21" height="20" viewBox="0 0 21 20" fill="none"><rect x="1" y="1" width="19" height="5" rx="1.5" stroke="#424242" stroke-width="1.4"/><path d="M2.5 6 V16 a2.5 2.5 0 0 0 2.5 2.5 H16 a2.5 2.5 0 0 0 2.5 -2.5 V6" stroke="#424242" stroke-width="1.4"/><path d="M8 10 H13" stroke="#424242" stroke-width="1.5"/></svg>
<div class="t" style="left:269.0px;top:672.61px;font-size:17px;line-height:17px;-webkit-text-stroke:0.25px #242424;color:#242424;letter-spacing:0.219px;">Archive</div>
<svg class="a" style="left:240px;top:723px;" width="22" height="19" viewBox="0 0 22 19" fill="none"><path d="M1 4 a2.5 2.5 0 0 1 2.5 -2.5 H8 l2 2.5 H18 a2.5 2.5 0 0 1 2.5 2.5 V15 a2.5 2.5 0 0 1 -2.5 2.5 H3.5 A2.5 2.5 0 0 1 1 15 Z" stroke="#424242" stroke-width="1.4" stroke-linejoin="round"/><path d="M1 7 H20.5" stroke="#424242" stroke-width="1.3"/></svg>
<div class="t" style="left:269.0px;top:724.61px;font-size:17px;line-height:17px;-webkit-text-stroke:0.25px #242424;color:#242424;letter-spacing:0.380px;">Conversation History</div>
<svg class="a" style="left:216px;top:776px;" width="10" height="15" viewBox="0 0 10 15" fill="none"><path d="M2 2 L8 7.5 L2 13" stroke="#242424" stroke-width="1.5" stroke-linecap="round" stroke-linejoin="round"/></svg>
<div class="t" style="left:238.0px;top:775.61px;font-size:17px;line-height:17px;-webkit-text-stroke:0.25px #242424;color:#242424;letter-spacing:0.250px;">Groups</div>
<svg class="a" style="left:212px;top:831px;" width="15" height="10" viewBox="0 0 15 10" fill="none"><path d="M2 2 L7.5 8 L13 2" stroke="#242424" stroke-width="1.5" stroke-linecap="round" stroke-linejoin="round"/></svg>
<div class="t" style="left:238.0px;top:826.61px;font-size:17px;line-height:17px;-webkit-text-stroke:0.4px #242424;color:#242424;letter-spacing:0.444px;">andreas@graphicdesignins...</div>
<div class="a" style="left:539px;top:234px;width:487px;height:640px;background:#fff;border-radius:5px 5px 0 0;box-shadow:0 0 1px rgba(0,0,0,0.12)"></div>
<div class="t" style="left:634.0px;top:254.92px;font-size:19px;line-height:19px;-webkit-text-stroke:0.4px #242424;color:#242424;letter-spacing:0.354px;">Focused</div>
<div class="a" style="left:626px;top:278px;width:92px;height:3px;background:#0f2f7a;border-radius:2px"></div>
<div class="t" style="left:747.0px;top:254.92px;font-size:19px;line-height:19px;-webkit-text-stroke:0.25px #242424;color:#242424;letter-spacing:0.870px;">Other</div>
<svg class="a" style="left:980px;top:253px;" width="21" height="16" viewBox="0 0 21 16" fill="none"><path d="M2.5 3 H19 M5.5 8.5 H16 M8 13.5 H13.5" stroke="#242424" stroke-width="1.7" stroke-linecap="round"/></svg>
<div class="a" style="left:539px;top:289px;width:487px;height:1px;background:#eef0f3;"></div>
<div class="a" style="left:539px;top:290px;width:487px;height:78px;background:#e9f1fb;"></div>
<svg class="a" style="left:553px;top:319px;" width="10" height="15" viewBox="0 0 10 15" fill="none"><path d="M2 2 L8 7.5 L2 13" stroke="#424242" stroke-width="1.4" stroke-linecap="round" stroke-linejoin="round"/></svg>
<svg class="a" style="left:575px;top:306px;" width="42" height="42" viewBox="0 0 42 42" fill="none"><defs><clipPath id="ca"><circle cx="21" cy="21" r="21"/></clipPath>
<radialGradient id="ga" cx="0.75" cy="0.45" r="0.8"><stop offset="0" stop-color="#7a6a3e"/><stop offset="1" stop-color="#3a2e18"/></radialGradient></defs>
<g clip-path="url(#ca)"><rect width="42" height="42" fill="url(#ga)"/>
<ellipse cx="18.900000000000002" cy="19.95" rx="14.7" ry="17.849999999999998" fill="#1c1411"/>
<circle cx="7.35" cy="8.82" r="6.3" fill="#e2357a"/>
<circle cx="3.78" cy="22.05" r="5.46" fill="#e8558a"/>
<ellipse cx="23.1" cy="23.520000000000003" rx="9.66" ry="12.18" fill="#f0cdb2"/>
<path d="M12.6 19.95 C13.65 8.4 30.45 7.35 33.6 18.900000000000002 C28.35 13.02 18.900000000000002 13.02 12.6 19.95 Z" fill="#1c1411"/>
<ellipse cx="22.05" cy="41.58" rx="11.55" ry="6.3" fill="#e03a72"/>
<ellipse cx="25.2" cy="30.45" rx="2.73" ry="1.26" fill="#c8706a"/>
</g></svg>
<div class="t" style="left:628.0px;top:306.61px;font-size:17px;line-height:17px;-webkit-text-stroke:0.25px #242424;color:#242424;letter-spacing:-0.117px;">Ji-an Lee</div>
<div class="t" style="left:628.0px;top:331.61px;font-size:17px;line-height:17px;-webkit-text-stroke:0.25px #242424;color:#242424;letter-spacing:0.542px;">The One and Only Moon</div>
<svg class="a" style="left:958px;top:302px;" width="24" height="23" viewBox="0 0 24 23" fill="none"><path d="M13.5 2 L21.5 10 L18 11 L14 15 L13.5 19 L5 10.5 L9 10 L13 6 Z" fill="#1362c2" stroke="#1362c2" stroke-width="1.5" stroke-linejoin="round"/><path d="M8.5 14.5 L2.5 20.5" stroke="#1362c2" stroke-width="2.2" stroke-linecap="round"/></svg>
<div class="t" style="left:931.0px;top:333.30px;font-size:15px;line-height:15px;-webkit-text-stroke:0.25px #242424;color:#242424;letter-spacing:0.261px;">8:32AM</div>
<div class="a" style="left:539px;top:368px;width:487px;height:47px;background:#f9f9fa;"></div>
<svg class="a" style="left:589px;top:389px;" width="15" height="9" viewBox="0 0 15 9" fill="none"><path d="M2 2 L7.5 7 L13 2" stroke="#242424" stroke-width="1.7" stroke-linecap="round" stroke-linejoin="round"/></svg>
<div class="t" style="left:628.0px;top:383.61px;font-size:17px;line-height:17px;-webkit-text-stroke:0.4px #242424;color:#242424;letter-spacing:0.659px;">Today</div>
<div class="a" style="left:539px;top:415px;width:487px;height:104px;background:#fdf9de;"></div>
<div class="a" style="left:539px;top:415px;width:5px;height:104px;background:#0f5bb5;"></div>
<svg class="a" style="left:553px;top:445px;" width="10" height="15" viewBox="0 0 10 15" fill="none"><path d="M2 2 L8 7.5 L2 13" stroke="#0f5bb5" stroke-width="1.5" stroke-linecap="round" stroke-linejoin="round"/></svg>
<svg class="a" style="left:575px;top:430px;" width="42" height="42" viewBox="0 0 42 42" fill="none"><defs><clipPath id="cb"><circle cx="21" cy="21" r="21"/></clipPath></defs>
<g clip-path="url(#cb)"><rect width="42" height="42" fill="#7d8a5e"/>
<circle cx="5.25" cy="14.7" r="5.25" fill="#e9d7d9"/><circle cx="37.800000000000004" cy="18.900000000000002" r="4.62" fill="#d9a3b5"/>
<circle cx="7.35" cy="32.550000000000004" r="5.25" fill="#c9d8b0"/><circle cx="36.75" cy="31.5" r="5.25" fill="#e7b9c8"/>
<ellipse cx="21.0" cy="19.95" rx="15.12" ry="15.75" fill="#1a1210"/>
<ellipse cx="21.42" cy="25.2" rx="7.98" ry="9.450000000000001" fill="#8a5637"/>
<path d="M17.22 28.979999999999997 Q21.42 32.550000000000004 25.62 28.979999999999997" stroke="#f1e4dc" stroke-width="2.1" fill="none"/>
<ellipse cx="21.0" cy="40.949999999999996" rx="12.6" ry="6.3" fill="#cf9f8a"/></g></svg>
<div class="t" style="left:628.0px;top:430.61px;font-size:17px;line-height:17px;-webkit-text-stroke:0.4px #242424;color:#242424;letter-spacing:0.573px;">Maya Robinson</div>
<div class="t" style="left:628.0px;top:456.61px;font-size:17px;line-height:17px;-webkit-text-stroke:0.4px #0d4288;color:#0d4288;letter-spacing:0.665px;">NYC travel itinerary</div>
<div class="t" style="left:628.0px;top:481.61px;font-size:17px;line-height:17px;-webkit-text-stroke:0.25px #242424;color:#242424;letter-spacing:0.390px;">Hi Andreas, I attached the itinerary I starte...</div>
<svg class="a" style="left:924px;top:429px;" width="20" height="22" viewBox="0 0 20 22" fill="none"><path d="M2 21 V2 H17.5 L13.5 8 L17.5 14 H2 Z" fill="#b0232a" stroke="#b0232a" stroke-width="1.6" stroke-linejoin="round"/><path d="M2 21 V2" stroke="#b0232a" stroke-width="2.2" stroke-linecap="round"/></svg>
<div class="t" style="left:926.0px;top:458.30px;font-size:15px;line-height:15px;-webkit-text-stroke:0.4px #0d4288;color:#0d4288;letter-spacing:-0.339px;">12:55PM</div>
<div class="a" style="left:539px;top:519px;width:487px;height:102px;background:#cfe1f7;"></div>
<div class="a" style="left:539px;top:519px;width:5px;height:102px;background:#0f5bb5;"></div>
<svg class="a" style="left:553px;top:548px;" width="10" height="15" viewBox="0 0 10 15" fill="none"><path d="M2 2 L8 7.5 L2 13" stroke="#0f5bb5" stroke-width="1.5" stroke-linecap="round" stroke-linejoin="round"/></svg>
<svg class="a" style="left:575px;top:534px;" width="42" height="42" viewBox="0 0 42 42" fill="none"><defs><clipPath id="cc"><circle cx="21" cy="21" r="21"/></clipPath>
<radialGradient id="gc" cx="0.45" cy="0.5" r="0.75"><stop offset="0" stop-color="#dfe0cc"/><stop offset="0.7" stop-color="#aab58a"/><stop offset="1" stop-color="#6f8450"/></radialGradient></defs>
<g clip-path="url(#cc)"><rect width="42" height="42" fill="url(#gc)"/>
<path d="M6.3 17.849999999999998 C7.35 5.25 27.3 1.05 35.699999999999996 10.5 C40.949999999999996 16.8 38.85 27.3 35.699999999999996 30.45 L30.45 21.0 C23.1 14.7 12.6 16.8 6.3 17.849999999999998 Z" fill="#ece7cf"/>
<path d="M9.450000000000001 18.900000000000002 C14.7 15.75 25.2 16.8 30.45 22.05 L28.35 31.5 L11.55 28.35 Z" fill="#9a6a44"/>
<ellipse cx="18.900000000000002" cy="24.779999999999998" rx="8.4" ry="9.66" fill="#ebc3a0"/>
<path d="M15.12 28.14 Q18.48 30.66 22.05 28.14" stroke="#fff" stroke-width="2.1" fill="none"/>
<path d="M24.15 42 L30.45 32.550000000000004 L39.9 31.5 L42 42 Z" fill="#3b3b34"/></g></svg>
<div class="t" style="left:628.0px;top:534.61px;font-size:17px;line-height:17px;-webkit-text-stroke:0.4px #242424;color:#242424;letter-spacing:0.862px;">Aiko Watanabe</div>
<div class="t" style="left:628.0px;top:560.61px;font-size:17px;line-height:17px;-webkit-text-stroke:0.25px #0d4288;color:#0d4288;letter-spacing:0.692px;">Hawaii Trip</div>
<div class="t" style="left:628.0px;top:585.61px;font-size:17px;line-height:17px;-webkit-text-stroke:0.25px #242424;color:#242424;letter-spacing:0.497px;">Here are more details on the itinerary.</div>
<div class="t" style="left:932.0px;top:562.30px;font-size:15px;line-height:15px;-webkit-text-stroke:0.4px #0d4288;color:#0d4288;letter-spacing:0.061px;">9:16AM</div>
<div class="a" style="left:539px;top:621px;width:487px;height:49px;background:#f9f9fa;"></div>
<svg class="a" style="left:589px;top:644px;" width="15" height="9" viewBox="0 0 15 9" fill="none"><path d="M2 2 L7.5 7 L13 2" stroke="#242424" stroke-width="1.7" stroke-linecap="round" stroke-linejoin="round"/></svg>
<div class="t" style="left:628.0px;top:639.61px;font-size:17px;line-height:17px;-webkit-text-stroke:0.4px #242424;color:#242424;letter-spacing:0.377px;">Yesterday</div>
<div class="a" style="left:539px;top:670px;width:5px;height:161px;background:#0f5bb5;"></div>
<svg class="a" style="left:553px;top:698px;" width="10" height="15" viewBox="0 0 10 15" fill="none"><path d="M2 2 L8 7.5 L2 13" stroke="#0f5bb5" stroke-width="1.5" stroke-linecap="round" stroke-linejoin="round"/></svg>
<svg class="a" style="left:575px;top:685px;" width="42" height="42" viewBox="0 0 42 42" fill="none"><circle cx="21" cy="21" r="21" fill="#fcecdc"/>
<path d="M12 33 V9 H18 L24 22 V9 H29.5 V33 H24 L17.5 20 V33 Z" fill="#a32fe6"/></svg>
<div class="t" style="left:628.0px;top:685.61px;font-size:17px;line-height:17px;-webkit-text-stroke:0.4px #242424;color:#242424;letter-spacing:0.819px;">Nod Publishing</div>
<div class="t" style="left:628.0px;top:710.61px;font-size:17px;line-height:17px;-webkit-text-stroke:0.3px #0d4288;color:#0d4288;letter-spacing:0.969px;">Confirmation Letter - MPOWMQ</div>
<div class="t" style="left:628.0px;top:736.61px;font-size:17px;line-height:17px;-webkit-text-stroke:0.25px #242424;color:#242424;letter-spacing:0.465px;">Thanks for your order!</div>
<svg class="a" style="left:954px;top:683px;" width="21" height="21" viewBox="0 0 21 21" fill="none"><rect x="1.5" y="1.5" width="17" height="17" rx="3" stroke="#424242" stroke-width="1.5"/><path d="M1.5 6 H18.5" stroke="#424242" stroke-width="1.5"/></svg>
<div class="t" style="left:925.0px;top:712.30px;font-size:15px;line-height:15px;-webkit-text-stroke:0.4px #0d4288;color:#0d4288;letter-spacing:0.461px;">2:54PM</div>
<div class="a" style="left:628px;top:766px;width:351px;height:52px;background:#f7f7f7;border-radius:4px"></div>
<svg class="a" style="left:641px;top:782px;" width="21" height="21" viewBox="0 0 21 21" fill="none"><rect x="1.5" y="1.5" width="17" height="17" rx="3" stroke="#424242" stroke-width="1.5"/><path d="M1.5 6 H18.5" stroke="#424242" stroke-width="1.5"/></svg>
<div class="t" style="left:674.0px;top:784.61px;font-size:17px;line-height:17px;-webkit-text-stroke:0.25px #424242;color:#424242;letter-spacing:0.543px;">Fri 11/22/2023 2:35 PM-10</div>
<div class="a" style="left:899px;top:771px;width:74px;height:42px;background:#ececec;border-radius:4px"></div>
<div class="t" style="left:914.0px;top:784.61px;font-size:17px;line-height:17px;-webkit-text-stroke:0.25px #0f4a9a;color:#0f4a9a;letter-spacing:-1.098px;">RSVP</div>
<div class="a" style="left:539px;top:831px;width:487px;height:1px;background:#f0f1f3;"></div>
<svg class="a" style="left:575px;top:848px;" width="42" height="42" viewBox="0 0 42 42" fill="none"><circle cx="21" cy="21" r="21" fill="#cfe9d6"/></svg>
<div class="t" style="left:628.0px;top:849.61px;font-size:17px;line-height:17px;-webkit-text-stroke:0.4px #242424;color:#242424;letter-spacing:0.202px;">Best For Your Organics</div>
<svg class="a" style="left:958px;top:847px;" width="22" height="22" viewBox="0 0 22 22" fill="none"><circle cx="11" cy="11" r="9" stroke="#0f4a9a" stroke-width="1.6"/><circle cx="11" cy="11" r="4" stroke="#0f4a9a" stroke-width="1.4"/></svg>
<div class="a" style="left:1037px;top:234px;width:820px;height:58px;background:#fff;border-radius:6px;box-shadow:0 1px 2px rgba(0,0,0,0.14),0 0 1px rgba(0,0,0,0.1)"></div>
<div class="t" style="left:1054.0px;top:248.84px;font-size:25px;line-height:25px;-webkit-text-stroke:0.25px #242424;color:#242424;letter-spacing:0.336px;">Hawaii Trip</div>
<svg class="a" style="left:1811px;top:257px;" width="19" height="12" viewBox="0 0 19 12" fill="none"><path d="M2 2 L9.5 9.5 L17 2" stroke="#424242" stroke-width="1.6" stroke-linecap="round" stroke-linejoin="round"/></svg>
<div class="a" style="left:1037px;top:302px;width:820px;height:600px;background:#fff;border-radius:6px;box-shadow:0 1px 2px rgba(0,0,0,0.14),0 0 1px rgba(0,0,0,0.1)"></div>
<div class="a" style="left:1863px;top:308px;width:8px;height:245px;background:#d6dbe1;border-radius:4px"></div>
<svg class="a" style="left:1052.5px;top:322.5px;" width="51.0" height="51.0" viewBox="0 0 51.0 51.0" fill="none"><defs><clipPath id="cr"><circle cx="25.5" cy="25.5" r="25.5"/></clipPath>
<radialGradient id="gr" cx="0.45" cy="0.5" r="0.75"><stop offset="0" stop-color="#dfe0cc"/><stop offset="0.7" stop-color="#aab58a"/><stop offset="1" stop-color="#6f8450"/></radialGradient></defs>
<g clip-path="url(#cr)"><rect width="51.0" height="51.0" fill="url(#gr)"/>
<path d="M7.6499999999999995 21.675 C8.924999999999999 6.375 33.15 1.2750000000000001 43.35 12.75 C49.725 20.400000000000002 47.175000000000004 33.15 43.35 36.975 L36.975 25.5 C28.05 17.849999999999998 15.299999999999999 20.400000000000002 7.6499999999999995 21.675 Z" fill="#ece7cf"/>
<path d="M11.475 22.95 C17.849999999999998 19.125 30.599999999999998 20.400000000000002 36.975 26.775000000000002 L34.425000000000004 38.25 L14.025 34.425000000000004 Z" fill="#9a6a44"/>
<ellipse cx="22.95" cy="30.09" rx="10.200000000000001" ry="11.73" fill="#ebc3a0"/>
<path d="M18.36 34.17 Q22.44 37.23 26.775000000000002 34.17" stroke="#fff" stroke-width="2.5500000000000003" fill="none"/>
<path d="M29.325 51.0 L36.975 39.525 L48.449999999999996 38.25 L51.0 51.0 Z" fill="#3b3b34"/></g></svg>
<svg class="a" style="left:1088px;top:358px;" width="17" height="17" viewBox="0 0 17 17" fill="none"><circle cx="8.5" cy="8.5" r="7.5" fill="#13a10e" stroke="#fff" stroke-width="1.5"/><path d="M5 8.7 L7.5 11 L12 6.5" stroke="#fff" stroke-width="1.6" stroke-linecap="round" stroke-linejoin="round"/></svg>
<div class="t" style="left:1120.0px;top:328.92px;font-size:19px;line-height:19px;-webkit-text-stroke:0.25px #242424;color:#242424;letter-spacing:0.654px;">Aiko Watanabe</div>
<div class="t" style="left:1120.0px;top:359.61px;font-size:17px;line-height:17px;-webkit-text-stroke:0.25px #242424;color:#242424;letter-spacing:-1.339px;">To:</div>
<svg class="a" style="left:1149px;top:359px;" width="16" height="16" viewBox="0 0 16 16" fill="none"><circle cx="8" cy="8" r="7.5" fill="#13a10e"/><path d="M4.6 8.2 L7 10.5 L11.4 6" stroke="#fff" stroke-width="1.6" stroke-linecap="round" stroke-linejoin="round"/></svg>
<div class="t" style="left:1170.0px;top:359.61px;font-size:17px;line-height:17px;-webkit-text-stroke:0.25px #242424;color:#242424;letter-spacing:0.354px;">Andreas Sotiriou</div>
<svg class="a" style="left:1624px;top:321px;" width="26" height="22" viewBox="0 0 26 22" fill="none"><path d="M12 20 H4.5 A3 3 0 0 1 1.5 17 V6.5 A3 3 0 0 1 4.5 3.5 H13" stroke="#115ea3" stroke-width="1.7"/><path d="M2 6.5 L8.5 11 L11 9.5" stroke="#115ea3" stroke-width="1.6"/><path d="M19.5 2.5 a2.8 2.8 0 0 1 4 4 L16 14 L12 15 L13 11 Z" stroke="#115ea3" stroke-width="1.6" stroke-linejoin="round"/><path d="M21.5 10 V17 A3 3 0 0 1 18.5 20 H12" stroke="#115ea3" stroke-width="1.7"/></svg>
<svg class="a" style="left:1670px;top:323px;" width="25" height="20" viewBox="0 0 25 20" fill="none"><path d="M8 2 L2.5 7.5 L8 13" stroke="#115ea3" stroke-width="1.7" stroke-linecap="round" stroke-linejoin="round"/><path d="M3 7.5 H11 C16.5 7.5 21.5 11 22 18" stroke="#115ea3" stroke-width="1.7" stroke-linecap="round"/></svg>
<svg class="a" style="left:1716px;top:323px;" width="25" height="20" viewBox="0 0 25 20" fill="none"><path d="M7 2 L1.5 7.5 L7 13" stroke="#115ea3" stroke-width="1.5" stroke-linecap="round" stroke-linejoin="round"/><path d="M11 2 L5.5 7.5 L11 13" stroke="#115ea3" stroke-width="1.7" stroke-linecap="round" stroke-linejoin="round"/><path d="M6 7.5 H12 C17 7.5 21.5 11 22 18" stroke="#115ea3" stroke-width="1.7" stroke-linecap="round"/></svg>
<svg class="a" style="left:1763px;top:323px;" width="25" height="20" viewBox="0 0 25 20" fill="none"><path d="M15 2 L20.5 7.5 L15 13" stroke="#115ea3" stroke-width="1.7" stroke-linecap="round" stroke-linejoin="round"/><path d="M20 7.5 H12 C6.5 7.5 2.5 11 2 18" stroke="#115ea3" stroke-width="1.7" stroke-linecap="round"/></svg>
<div class="a" style="left:1812.5px;top:331px;width:3px;height:3px;background:#115ea3;border-radius:50%"></div>
<div class="a" style="left:1819.5px;top:331px;width:3px;height:3px;background:#115ea3;border-radius:50%"></div>
<div class="a" style="left:1826.5px;top:331px;width:3px;height:3px;background:#115ea3;border-radius:50%"></div>
<div class="t" style="left:1664.0px;top:361.30px;font-size:15px;line-height:15px;-webkit-text-stroke:0.25px #424242;color:#424242;letter-spacing:0.177px;">Thu 10/26/2023 9:16 AM</div>
<div class="t" style="left:1120.0px;top:400.76px;font-size:18px;line-height:18px;-webkit-text-stroke:0.3px #1a1a1a;color:#1a1a1a;letter-spacing:0.400px;">Here are more details on the itinerary.</div>
<div class="t" style="left:1120.0px;top:449.76px;font-size:18px;line-height:18px;-webkit-text-stroke:0.3px #1a1a1a;color:#1a1a1a;letter-spacing:0.318px;">Day 1: Arrive in Honolulu, O‘ahu</div>
<div class="t" style="left:1150.0px;top:498.76px;font-size:18px;line-height:18px;-webkit-text-stroke:0.3px #1a1a1a;color:#1a1a1a;letter-spacing:0.376px;">Check in to your hotel and relax after your flight.</div>
<div class="a" style="left:1130.5px;top:504px;width:6px;height:6px;background:#1a1a1a;border-radius:50%"></div>
<div class="t" style="left:1150.0px;top:522.76px;font-size:18px;line-height:18px;-webkit-text-stroke:0.3px #1a1a1a;color:#1a1a1a;letter-spacing:0.442px;">Explore the vibrant and historic Chinatown district, where you can find art</div>
<div class="a" style="left:1130.5px;top:528px;width:6px;height:6px;background:#1a1a1a;border-radius:50%"></div>
<div class="t" style="left:1150.0px;top:546.76px;font-size:18px;line-height:18px;-webkit-text-stroke:0.3px #1a1a1a;color:#1a1a1a;letter-spacing:0.274px;">galleries, boutiques, restaurants, and bars.</div>
<div class="t" style="left:1150.0px;top:571.76px;font-size:18px;line-height:18px;-webkit-text-stroke:0.3px #1a1a1a;color:#1a1a1a;letter-spacing:0.307px;">Enjoy a sunset dinner cruise along the Waikīkī coastline, with live music and</div>
<div class="a" style="left:1130.5px;top:577px;width:6px;height:6px;background:#1a1a1a;border-radius:50%"></div>
<div class="t" style="left:1150.0px;top:595.76px;font-size:18px;line-height:18px;-webkit-text-stroke:0.3px #1a1a1a;color:#1a1a1a;letter-spacing:0.687px;">entertainment.</div>
<div class="t" style="left:1120.0px;top:644.76px;font-size:18px;line-height:18px;-webkit-text-stroke:0.3px #1a1a1a;color:#1a1a1a;letter-spacing:0.195px;">Day 2: Pearl Harbor and Diamond Head</div>
<div class="t" style="left:1150.0px;top:693.76px;font-size:18px;line-height:18px;-webkit-text-stroke:0.3px #1a1a1a;color:#1a1a1a;letter-spacing:0.449px;">Visit the Pearl Harbor National Memorial, where you can learn about the history</div>
<div class="a" style="left:1130.5px;top:699px;width:6px;height:6px;background:#1a1a1a;border-radius:50%"></div>
<div class="t" style="left:1150.0px;top:717.76px;font-size:18px;line-height:18px;-webkit-text-stroke:0.3px #1a1a1a;color:#1a1a1a;letter-spacing:0.321px;">and significance of the attack that brought the U.S. into World War II. You can also</div>
<div class="t" style="left:1150.0px;top:741.76px;font-size:18px;line-height:18px;-webkit-text-stroke:0.3px #1a1a1a;color:#1a1a1a;letter-spacing:0.284px;">tour the USS Arizona Memorial, the USS Bowfin Submarine Museum &amp; Park, and</div>
<div class="t" style="left:1150.0px;top:766.76px;font-size:18px;line-height:18px;-webkit-text-stroke:0.3px #1a1a1a;color:#1a1a1a;letter-spacing:0.304px;">the Pacific Aviation Museum.</div>
<div class="t" style="left:1150.0px;top:790.76px;font-size:18px;line-height:18px;-webkit-text-stroke:0.3px #1a1a1a;color:#1a1a1a;letter-spacing:0.436px;">Hike up to the summit of Diamond Head State Monument, a volcanic crater that</div>
<div class="a" style="left:1130.5px;top:796px;width:6px;height:6px;background:#1a1a1a;border-radius:50%"></div>
<div class="t" style="left:1150.0px;top:814.76px;font-size:18px;line-height:18px;-webkit-text-stroke:0.3px #1a1a1a;color:#1a1a1a;letter-spacing:0.398px;">offers panoramic views of Honolulu and the ocean.</div>
<div class="t" style="left:1150.0px;top:839.76px;font-size:18px;line-height:18px;-webkit-text-stroke:0.3px #1a1a1a;color:#1a1a1a;letter-spacing:0.255px;">Relax on the famous Waikīkī Beach, where you can swim, surf, or sunbathe.</div>
<div class="a" style="left:1130.5px;top:845px;width:6px;height:6px;background:#1a1a1a;border-radius:50%"></div>
<div class="a" style="left:0;top:856px;width:2000px;height:2px;background:#fff"></div>
</body></html>
